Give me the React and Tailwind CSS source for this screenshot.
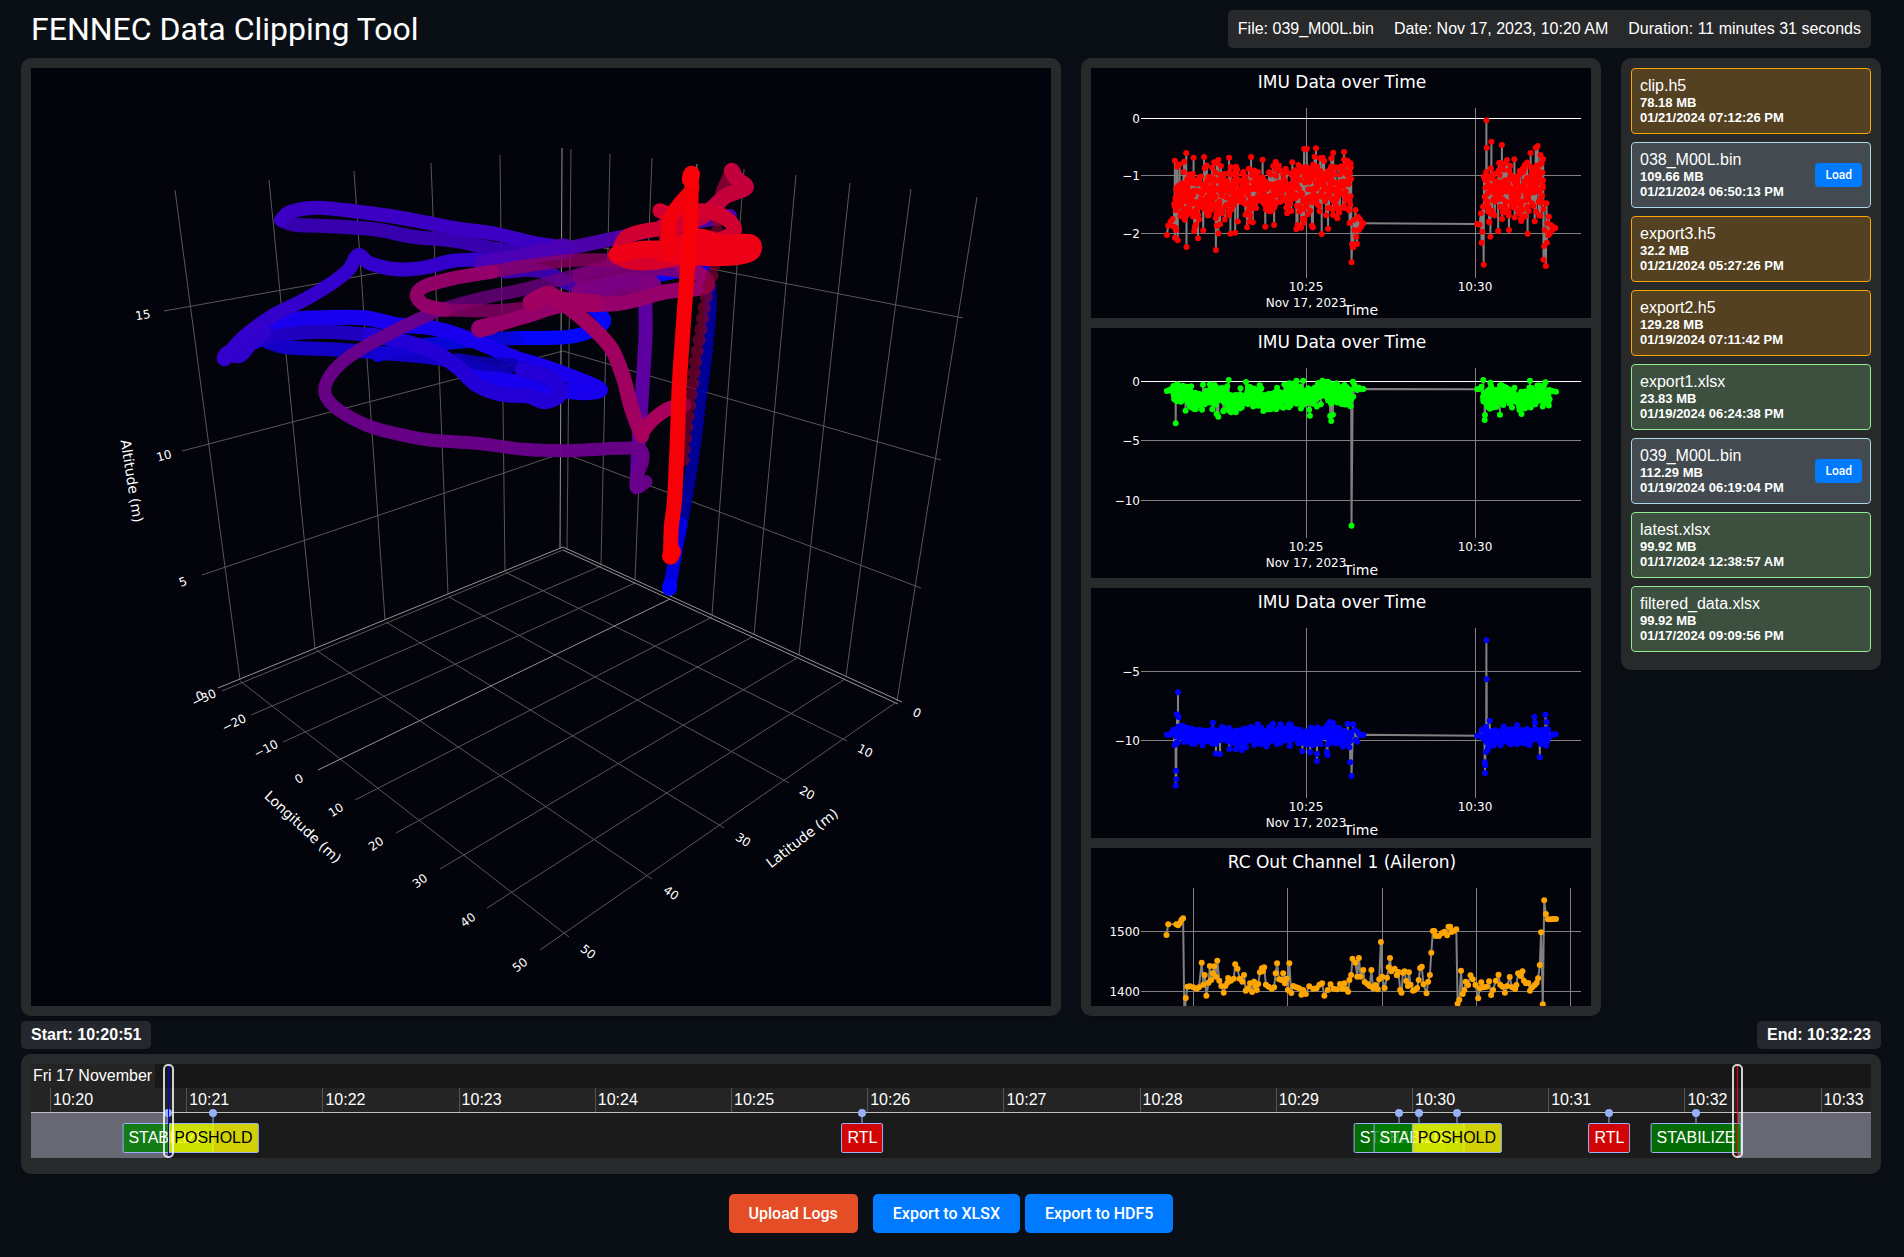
import React from "react";

/* ---------- helpers ---------- */

function rng(seed) {
  let s = seed;
  return () => {
    s = (s * 1664525 + 1013904223) % 4294967296;
    return s / 4294967296;
  };
}

// Catmull-Rom spline through the points, as cubic segments
function spline(pts) {
  const f = (n) => Math.round(n * 10) / 10;
  let d = `M${f(pts[0][0])} ${f(pts[0][1])}`;
  for (let i = 0; i < pts.length - 1; i++) {
    const a = pts[i - 1] || pts[i];
    const b = pts[i];
    const c = pts[i + 1];
    const e = pts[i + 2] || c;
    d += `C${f(b[0] + (c[0] - a[0]) / 6)} ${f(b[1] + (c[1] - a[1]) / 6)} ${f(c[0] - (e[0] - b[0]) / 6)} ${f(c[1] - (e[1] - b[1]) / 6)} ${f(c[0])} ${f(c[1])}`;
  }
  return d;
}

const scenePoint = ([u, v]) => [u / 2.529 + 200, v / 3 + 140];

/* ---------- 3D flight path ---------- */

const GRID = [
  [175, 190, 240, 680], [269, 180, 315, 649], [354, 171, 385, 620], [431, 163, 448, 594], [500, 155, 505, 571],
  [571, 149, 567, 550], [610, 154, 601, 564], [652, 158, 635, 580], [744, 169, 712, 615],
  [796, 175, 754, 635], [850, 183, 799, 655], [911, 189, 846, 677], [977, 197, 897, 701],
  [164, 311, 563, 240], [563, 240, 963, 318],
  [182, 451, 563, 351], [563, 351, 941, 460],
  [202, 575, 563, 453], [563, 453, 921, 588],
  [222, 691, 563, 550],
  [251, 715, 601, 566], [283, 742, 635, 583], [355, 800, 712, 617], [396, 833, 752, 637],
  [440, 869, 797, 658], [487, 908, 845, 679], [540, 950, 895, 703],
  [505, 572, 847, 741], [449, 597, 789, 783], [386, 622, 724, 828], [316, 650, 652, 879], [240, 681, 569, 937],
];
const ZERO = [
  [562, 148, 560, 549], [697, 164, 671, 597],
  [218, 688, 563, 547], [563, 547, 902, 702], [563, 550, 898, 704], [318, 770, 670, 599],
];

const SCENE_TICKS = [
  ["15", 143, 315, -9], ["10", 164, 456, -15], ["5", 183, 582, -20],
  ["−30", 204, 698, -25], ["0", 200, 696, -25], ["−20", 234, 723, -26], ["−10", 266, 749, -27], ["0", 299, 779, -30],
  ["10", 336, 810, -32], ["20", 376, 844, -34], ["30", 420, 881, -36], ["40", 468, 920, -37], ["50", 520, 965, -38],
  ["0", 917, 713, 25], ["10", 865, 751, 27], ["20", 807, 793, 30], ["30", 743, 840, 33], ["40", 671, 893, 36], ["50", 588, 952, 39],
];

const PATHS = [
  { c: "#0000b4", w: 13, o: 0.6, dash: "0 8", p: [[1215, 1180], [1230, 1080], [1250, 930], [1265, 790], [1280, 650], [1290, 530], [1290, 440], [1270, 385]] },
  { c: "#0000a8", w: 12, o: 0.7, dash: "0 9", p: [[1200, 1250], [1230, 1080], [1250, 930], [1265, 790], [1280, 650], [1290, 530], [1290, 440], [1270, 385]] },
  { c: "#0000dc", w: 13, o: 1, p: [[1188, 1340], [1203, 1240], [1216, 1150]] },
  { c: "#0000ff", w: 15, o: 1, p: [[1187, 1345], [1188, 1338]] },
  { c: "#0606fa", w: 14, o: 1, p: [[1270, 380], [1180, 400], [1100, 418], [1010, 440], [970, 470], [1005, 515], [1022, 545], [985, 575], [920, 592], [800, 594]] },
  { c: "#0606e0", w: 14, o: 0.95, p: [[800, 594], [660, 605], [540, 620], [450, 645]] },
  { c: "#1400d2", w: 14, o: 0.95, p: [[170, 605], [220, 622], [330, 628], [470, 640], [600, 655], [720, 690], [800, 725], [880, 750]] },
  { c: "#1800ee", w: 15, o: 1, p: [[140, 605], [180, 560], [240, 538], [320, 533], [420, 534], [500, 555], [580, 562], [640, 580], [720, 615], [800, 655], [870, 680], [950, 715], [1012, 748], [975, 758], [920, 752], [850, 738], [760, 720], [690, 700]] },
  { c: "#0c00b4", w: 14, o: 0.9, p: [[650, 660], [720, 672], [790, 675]] },
  { c: "#1000c8", w: 14, o: 0.95, p: [[815, 685], [860, 705], [905, 735]] },
  { c: "#2000c8", w: 14, o: 0.95, p: [[150, 600], [220, 582], [320, 575], [430, 585]] },
  { c: "#2400d6", w: 15, o: 1, p: [[430, 585], [520, 605], [600, 640], [655, 685], [700, 735], [760, 762], [830, 768], [872, 785], [910, 765], [905, 735], [870, 705], [815, 690]] },
  { c: "#3000cc", w: 16, o: 1, p: [[62, 655], [72, 640], [100, 645], [125, 612], [160, 575]] },
  { c: "#3400cc", w: 14, o: 1, p: [[62, 655], [110, 592], [180, 530], [260, 482], [330, 432], [375, 390], [400, 345], [430, 370], [500, 388], [570, 382], [640, 362], [720, 358], [820, 350], [930, 335]] },
  { c: "#3a00b8", w: 14, o: 0.95, p: [[205, 240], [240, 254], [320, 258], [440, 268], [540, 290], [640, 302], [740, 325], [860, 345]] },
  { c: "#3c00c4", w: 14, o: 1, p: [[930, 325], [840, 308], [750, 282], [650, 265], [560, 245], [480, 228], [400, 215], [300, 203], [230, 215], [205, 240]] },
  { c: "#4000bc", w: 14, o: 0.9, p: [[770, 395], [830, 390], [880, 398], [930, 430], [970, 440]] },
  { c: "#5000b0", w: 14, o: 0.95, p: [[930, 325], [1010, 305], [1090, 285], [1200, 255], [1280, 240], [1340, 228]] },
  { c: "#4c00b4", w: 18, o: 0.95, p: [[715, 372], [790, 358], [860, 340], [920, 322]] },
  { c: "#5c00a0", w: 14, o: 1, p: [[1160, 350], [1140, 400], [1127, 470], [1127, 580], [1120, 720], [1112, 860], [1107, 960], [1104, 1042]] },
  { c: "#6c008c", w: 13, o: 0.95, p: [[1128, 1025], [1104, 1042], [1108, 1000], [1120, 960], [1112, 928], [1060, 925], [930, 932], [820, 928], [700, 910], [580, 900], [500, 882], [420, 855], [340, 800], [315, 750], [340, 690], [400, 632], [500, 568], [600, 512]] },
  { c: "#6e0082", w: 13, o: 0.8, p: [[600, 512], [700, 478], [830, 445], [960, 402], [1060, 370], [1180, 350]] },
  { c: "#80007c", w: 22, o: 0.95, p: [[965, 460], [1020, 445], [1090, 428], [1140, 440]] },
  { c: "#7c0078", w: 15, o: 0.9, p: [[960, 410], [1060, 385], [1170, 385], [1260, 400]] },
  { c: "#8c0064", w: 13, o: 0.8, p: [[1240, 365], [1100, 362], [960, 360], [840, 375], [740, 395]] },
  { c: "#98006c", w: 14, o: 0.95, p: [[740, 395], [640, 415], [570, 438], [548, 465], [568, 495], [620, 510]] },
  { c: "#8c0068", w: 13, o: 0.8, p: [[620, 510], [740, 512], [830, 505]] },
  { c: "#900070", w: 18, o: 1, p: [[708, 566], [735, 558]] },
  { c: "#96006a", w: 15, o: 1, p: [[710, 565], [770, 547], [840, 522], [920, 495], [1060, 490], [1180, 455], [1275, 442], [1272, 410], [1220, 378]] },
  { c: "#a00060", w: 18, o: 1, p: [[838, 488], [880, 465], [915, 482], [1000, 490]] },
  { c: "#a00060", w: 15, o: 1, p: [[890, 470], [940, 510], [990, 560], [1040, 625], [1070, 710], [1090, 800], [1117, 888]] },
  { c: "#a8005c", w: 14, o: 1, p: [[1117, 880], [1145, 840], [1185, 806], [1225, 795]] },
  { c: "#840030", w: 13, o: 0.7, dash: "0 11", p: [[1222, 960], [1232, 850], [1245, 740], [1255, 650], [1268, 560], [1280, 470], [1300, 380], [1308, 270], [1318, 170]] },
  { c: "#8c0034", w: 12, o: 0.9, dash: "0 4", p: [[1310, 240], [1318, 160], [1340, 100]] },
  { c: "#c4003c", w: 16, o: 1, p: [[1345, 92], [1358, 118], [1380, 143], [1330, 168], [1300, 200], [1260, 235], [1170, 260]] },
  { c: "#d20030", w: 15, o: 1, p: [[1163, 212], [1200, 225], [1270, 212], [1330, 235], [1350, 275], [1290, 305], [1180, 300]] },
  { c: "#d00030", w: 15, o: 1, p: [[1062, 325], [1080, 290], [1130, 272], [1210, 260]] },
  { c: "#d80028", w: 16, o: 1, p: [[1052, 345], [1090, 365], [1150, 365], [1220, 350]] },
  { c: "#ee0016", w: 17, o: 1, p: [[1055, 343], [1120, 328], [1190, 325], [1260, 292], [1320, 308], [1392, 308], [1393, 338], [1340, 352], [1250, 350], [1170, 340]] },
  { c: "#ee0016", w: 20, o: 1, p: [[1200, 325], [1290, 325], [1380, 324]] },
  { c: "#f2000e", w: 15, o: 1, p: [[1240, 115], [1243, 150], [1215, 190], [1190, 235], [1185, 290], [1185, 335]] },
  { c: "#f80008", w: 15, o: 1, p: [[1242, 160], [1240, 260], [1232, 400], [1222, 560], [1212, 740], [1207, 900], [1200, 1080], [1192, 1160], [1190, 1250]] },
  { c: "#ff0008", w: 17, o: 1, p: [[1243, 103], [1240, 118]] },
  { c: "#ff0000", w: 17, o: 1, p: [[1195, 1235], [1190, 1248]] },
];

function FlightScene() {
  return (
    <svg viewBox="31 68 1020 938" className="block h-full w-full bg-[#03030c]" role="img" aria-label="Flight path">
      <g stroke="#585858" strokeWidth="1">
        {GRID.map(([a, b, c, d], i) => <line key={i} x1={a} y1={b} x2={c} y2={d} />)}
      </g>
      <g stroke="#949494" strokeWidth="1">
        {ZERO.map(([a, b, c, d], i) => <line key={i} x1={a} y1={b} x2={c} y2={d} />)}
      </g>
      <g fill="none" strokeLinecap="round" strokeLinejoin="round">
        {PATHS.map((t, i) => (
          <path key={i} d={spline(t.p.map(scenePoint))} stroke={t.c} strokeWidth={t.w} opacity={t.o} strokeDasharray={t.dash} />
        ))}
      </g>
      <g fill="#fff" fontFamily="'DejaVu Sans', sans-serif" fontSize="12" textAnchor="middle">
        {SCENE_TICKS.map(([t, x, y, r], i) => (
          <text key={i} transform={`translate(${x} ${y}) rotate(${r})`} y="4">{t}</text>
        ))}
        <g fontSize="14">
          <text transform="translate(132 481) rotate(81)" y="5">Altitude (m)</text>
          <text transform="translate(303 827) rotate(43)" y="5">Longitude (m)</text>
          <text transform="translate(802 838) rotate(-38)" y="5">Latitude (m)</text>
        </g>
      </g>
    </svg>
  );
}

/* ---------- time series ---------- */

// noisy samples around a slowly swaying centre; values run on a 3x vertical grid
function band(rand, from, to, count, centre, spread, clip, sway) {
  const out = [];
  for (let i = 0; i < count; i++) {
    const u = from + ((to - from) * i) / count;
    const noise = ((rand() + rand() + rand()) / 1.5 - 1) * spread;
    let v = centre + sway * Math.sin(u / 17) + noise;
    if (v < clip[0] || v > clip[1]) v = centre + noise / 3;
    out.push([u, v]);
  }
  return out;
}
const byTime = (pts) => pts.slice().sort((a, b) => a[0] - b[0]);

const r1 = rng(7);
const RED = byTime([
  [257, 555], [261, 527], [268, 515], [274, 507], [277, 530], [281, 563], [284, 540], [289, 571],
  ...band(r1, 279, 420, 170, 440, 150, [330, 560], 8),
  ...band(r1, 420, 640, 250, 425, 120, [345, 515], 8),
  ...band(r1, 640, 803, 180, 415, 150, [320, 535], 8),
  [308, 335], [314, 309], [315, 591], [336, 323], [349, 565], [367, 321], [402, 600], [409, 330], [441, 323], [445, 551], [459, 548],
  [494, 532], [506, 321], [511, 517], [540, 329], [548, 530], [574, 525], [579, 336], [628, 337], [640, 537], [654, 533], [663, 297], [671, 296],
  [698, 295], [694, 320], [686, 527], [715, 552], [734, 536], [722, 333], [749, 308], [761, 505], [781, 306], [792, 333], [800, 340],
  [803, 637], [805, 583], [808, 592], [810, 510], [812, 540], [815, 480], [817, 560], [819, 582], [822, 500], [825, 540], [828, 508], [832, 530], [835, 520], [838, 520],
  [1175, 522], [1182, 524], [1186, 490], [1188, 578], [1190, 545], [1192, 470], [1194, 644], [1195, 380], [1197, 440],
  [1202, 211], [1203, 293],
  ...band(r1, 1198, 1372, 200, 420, 150, [335, 530], 8),
  [1217, 275], [1214, 560], [1248, 285], [1237, 543], [1269, 540], [1263, 330], [1285, 328], [1324, 551], [1333, 309], [1348, 293], [1354, 288], [1362, 315], [1370, 327],
  [1371, 629], [1373, 588], [1375, 540], [1378, 648], [1380, 460], [1381, 578], [1383, 520], [1385, 556], [1387, 500], [1390, 550], [1393, 525], [1397, 540], [1401, 532], [1406, 534],
]);

const r2 = rng(21);
const GREEN = byTime([
  [257, 213], [263, 211], [269, 208], [274, 215], [283, 310],
  ...band(r2, 276, 420, 190, 232, 52, [190, 274], 8),
  [409, 290], [404, 282], [440, 180], [491, 186],
  ...band(r2, 420, 620, 260, 237, 46, [192, 280], 7),
  [640, 182], [660, 182], [717, 182], [680, 287], [743, 303], [740, 288], [748, 284],
  ...band(r2, 620, 803, 230, 222, 50, [184, 272], 10),
  [803, 617], [807, 185], [808, 230], [812, 195], [816, 205], [820, 210], [825, 203], [831, 208], [838, 207],
  [1175, 208], [1181, 207], [1187, 200], [1193, 180], [1197, 300], [1198, 285], [1214, 188],
  ...band(r2, 1192, 1390, 240, 230, 48, [190, 280], 8),
  [1242, 284], [1306, 282], [1331, 182], [1377, 187], [1393, 212], [1400, 214], [1408, 215],
]);

const r3 = rng(33);
const BLUE = byTime([
  [257, 494], [264, 494], [270, 490], [275, 480], [283, 647], [284, 602], [285, 628], [280, 525], [287, 433], [290, 367], [291, 441],
  ...band(r3, 282, 803, 640, 497, 38, [462, 534], 4),
  [393, 458], [402, 551], [414, 552], [442, 537], [461, 538], [479, 540], [491, 532], [526, 463], [571, 461], [593, 463], [658, 544], [681, 547],
  [701, 552], [701, 573], [730, 546], [732, 555], [739, 456], [749, 460], [792, 462], [797, 532], [799, 577], [803, 618], [808, 463],
  [812, 480], [816, 510], [820, 515], [822, 486], [828, 494], [833, 496], [838, 494],
  [1175, 497], [1181, 497], [1187, 480], [1192, 505], [1197, 577], [1198, 609], [1199, 586], [1201, 546], [1202, 211], [1203, 328], [1206, 540], [1212, 452],
  ...band(r3, 1196, 1385, 240, 499, 36, [466, 534], 4),
  [1293, 465], [1344, 440], [1346, 458], [1360, 562], [1377, 434], [1380, 456], [1378, 527], [1390, 500], [1398, 493], [1407, 493],
]);

const ORANGE = [
  [256, 315], [261, 283], [285, 283], [290, 286], [295, 280], [300, 270], [305, 265], [309, 580], [313, 504], [318, 470], [325, 469], [335, 472], [345, 476],
  [352, 472], [360, 398], [365, 464], [369, 435], [374, 497], [380, 458], [384, 408], [388, 450], [393, 430], [397, 409], [402, 440], [406, 392], [412, 452],
  [418, 468], [425, 488], [430, 468], [436, 458], [438, 444], [446, 452], [455, 446], [459, 403], [466, 416], [472, 446], [480, 455], [485, 435], [490, 482],
  [497, 475], [503, 460], [509, 486], [515, 455], [519, 468], [523, 480], [527, 462], [532, 427], [538, 415], [541, 424], [545, 412], [550, 464], [558, 470],
  [567, 476], [574, 472], [579, 430], [583, 400], [589, 448], [596, 450], [601, 430], [606, 460], [611, 446], [615, 480], [619, 400], [625, 489], [631, 468],
  [640, 472], [648, 475], [655, 494], [660, 480], [668, 492], [678, 469], [690, 476], [700, 475], [708, 464], [716, 460], [723, 497], [733, 480], [741, 463],
  [750, 476], [760, 478], [769, 462], [776, 476], [782, 460], [788, 478], [793, 485], [797, 450], [802, 435], [806, 386], [815, 398], [820, 440], [825, 384],
  [830, 440], [838, 420], [842, 456], [850, 462], [857, 468], [862, 420], [867, 475], [874, 465], [881, 478], [885, 448], [890, 336], [894, 440], [901, 474],
  [908, 443], [913, 412], [917, 384], [921, 424], [931, 416], [937, 436], [942, 426], [947, 480], [951, 488], [955, 428], [960, 424], [965, 453], [970, 468],
  [973, 427], [978, 464], [985, 482], [990, 480], [997, 474], [1002, 450], [1006, 414], [1011, 410], [1016, 463], [1025, 490], [1030, 455], [1035, 435],
  [1039, 368], [1044, 303], [1048, 303], [1052, 318], [1062, 318], [1070, 310], [1078, 305], [1086, 316], [1090, 290], [1095, 290], [1099, 306], [1105, 303],
  [1113, 298], [1117, 521], [1122, 509], [1127, 422], [1132, 492], [1137, 480], [1141, 455], [1148, 465], [1155, 436], [1162, 448], [1170, 465], [1178, 505],
  [1183, 475], [1187, 457], [1195, 472], [1203, 470], [1210, 454], [1216, 495], [1222, 480], [1230, 452], [1238, 434], [1243, 464], [1250, 470], [1257, 488],
  [1264, 468], [1271, 441], [1278, 472], [1287, 477], [1291, 465], [1296, 430], [1303, 438], [1309, 424], [1313, 452], [1319, 460], [1326, 459], [1331, 482],
  [1338, 472], [1345, 465], [1351, 458], [1355, 445], [1360, 405], [1364, 307], [1369, 523], [1373, 211], [1378, 252], [1384, 268], [1392, 268], [1400, 267], [1408, 267],
];

const FIVE_MIN = [["10:25", 215], ["10:30", 384]];

const CHARTS = [
  { title: "IMU Data over Time", color: "#ff0000", data: RED, shift: 18, y: [["0", 50, true], ["−1", 107], ["−2", 165]], x: FIVE_MIN },
  { title: "IMU Data over Time", color: "#00ff00", data: GREEN, shift: 8, y: [["0", 53, true], ["−5", 112], ["−10", 172]], x: FIVE_MIN },
  { title: "IMU Data over Time", color: "#0000ff", data: BLUE, shift: 18, y: [["−5", 83], ["−10", 152]], x: FIVE_MIN },
  { title: "RC Out Channel 1 (Aileron)", color: "#ffa500", data: ORANGE, shift: 18, y: [["1500", 83], ["1400", 143]], x: [["", 102], ["", 196], ["", 291], ["", 385], ["", 479]] },
];

function Chart({ title, color, data, shift, x, y }) {
  const pts = data.map(([u, v]) => [Math.round((u / 2.958 - 11) * 10) / 10, Math.round((v / 3 - shift) * 10) / 10]);
  const labelled = x[0][0] !== "";
  return (
    <svg viewBox="0 0 500 250" className="block w-full shrink-0 bg-[#03030c]" role="img" aria-label={title}>
      <g stroke="#808080" strokeWidth="1" shapeRendering="crispEdges">
        {x.map(([, p]) => <line key={p} x1={p + 0.5} y1="40" x2={p + 0.5} y2="210" />)}
        {y.map(([, p, zero]) => <line key={p} x1="50" y1={p + 0.5} x2="490" y2={p + 0.5} stroke={zero ? "#fff" : "#808080"} />)}
      </g>
      <polyline points={pts.map((p) => p.join(",")).join(" ")} fill="none" stroke="#808080" strokeWidth="2" />
      <g fill={color}>
        {pts.map((p, i) => <circle key={i} cx={p[0]} cy={p[1]} r="3" />)}
      </g>
      <g fill="#fff" fontFamily="'DejaVu Sans', sans-serif" fontSize="12">
        <text x="251" y="20" fontSize="17" textAnchor="middle">{title}</text>
        {y.map(([t, p]) => <text key={t} x="49" y={p + 5} textAnchor="end">{t}</text>)}
        {labelled && (
          <g textAnchor="middle">
            {x.map(([t, p]) => <text key={t} x={p} y="223">{t}</text>)}
            <text x="215" y="239">Nov 17, 2023</text>
            <text x="270" y="247" fontSize="14">Time</text>
          </g>
        )}
      </g>
    </svg>
  );
}

/* ---------- files ---------- */

const FILES = [
  ["clip.h5", "78.18 MB", "01/21/2024 07:12:26 PM"],
  ["038_M00L.bin", "109.66 MB", "01/21/2024 06:50:13 PM"],
  ["export3.h5", "32.2 MB", "01/21/2024 05:27:26 PM"],
  ["export2.h5", "129.28 MB", "01/19/2024 07:11:42 PM"],
  ["export1.xlsx", "23.83 MB", "01/19/2024 06:24:38 PM"],
  ["039_M00L.bin", "112.29 MB", "01/19/2024 06:19:04 PM"],
  ["latest.xlsx", "99.92 MB", "01/17/2024 12:38:57 AM"],
  ["filtered_data.xlsx", "99.92 MB", "01/17/2024 09:09:56 PM"],
];
const FILE_STYLE = {
  h5: "border-[#ffa500] bg-[#ffa500]/20",
  bin: "border-[#add8e6] bg-[#add8e6]/20",
  xlsx: "border-[#90ee90] bg-[#90ee90]/20",
};

function FileCard({ file: [name, size, date] }) {
  const ext = name.split(".")[1];
  return (
    <li className={`flex items-center justify-between rounded-[4px] border bg-clip-padding p-2 ${FILE_STYLE[ext]}`}>
      <div className="text-[13px] leading-[15px] font-bold">
        <div className="text-base leading-[18px] font-normal">{name}</div>
        <div>{size}</div>
        <div>{date}</div>
      </div>
      {ext === "bin" && (
        <button className="h-6 rounded-[4px] bg-[#007bff] px-[10px] font-['Roboto',sans-serif] text-xs font-medium">Load</button>
      )}
    </li>
  );
}

/* ---------- timeline ---------- */

// horizontal position of a time, in minutes after 10:20, as a share of the strip
const at = (minutes) => `${((19 + minutes * 136.2) / 1840) * 100}%`;

const MODES = [
  [0.865, "STABILIZE"], [1.2, "POSHOLD"], [5.965, "RTL"], [9.905, "STABILIZE"], [10.05, "STABILIZE"],
  [10.33, "POSHOLD"], [11.45, "RTL"], [12.085, "STABILIZE"],
];
const MODE_STYLE = {
  STABILIZE: "bg-[#008000]/80 text-white",
  POSHOLD: "bg-[#ffff00]/80 text-black",
  RTL: "bg-[#ff0000]/80 text-white",
};

function Cursor({ minutes, color, label }) {
  return (
    <div role="slider" aria-label={label} aria-valuenow={minutes} className="absolute inset-y-0 -ml-[5px] flex w-[11px] justify-center rounded-[5px] border-2 border-white/80" style={{ left: at(minutes) }}>
      <span className={`w-px ${color}`} />
    </div>
  );
}

function Timeline() {
  return (
    <div className="relative h-[94px] overflow-hidden bg-[#1b1b1b] leading-6">
      <div className="h-6 bg-[#171717]">
        <span className="inline-block bg-[#242424] pr-[3px] pl-[2px]">Fri 17 November</span>
      </div>
      <div className="relative h-6 bg-[#242424]">
        {Array.from({ length: 14 }, (_, i) => (
          <span key={i} className="absolute top-0 border-l border-[#555] pl-[2px]" style={{ left: at(i) }}>{`10:${20 + i}`}</span>
        ))}
      </div>
      <div className="relative h-[46px] border-t border-[#bfbfbf]">
        <div className="absolute inset-y-0 left-0 bg-[#676874]" style={{ width: at(0.865) }} />
        <div className="absolute inset-y-0 right-0 bg-[#676874]" style={{ left: at(12.385) }} />
        {MODES.map(([m], i) => (
          <div key={i} className="absolute top-0 h-[10px] w-[2px] -translate-x-1/2 bg-[#97b0f8]/50" style={{ left: at(m) }} />
        ))}
        {MODES.map(([m, name], i) => (
          <div key={i} className={`absolute top-[10px] h-[30px] -translate-x-1/2 rounded-[2px] border border-[#97b0f8] px-[5px] leading-7 ${MODE_STYLE[name]}`} style={{ left: at(m) }}>{name}</div>
        ))}
        {MODES.map(([m], i) => (
          <div key={i} className="absolute -top-1 size-2 -translate-x-1/2 rounded-full bg-[#97b0f8]" style={{ left: at(m) }} />
        ))}
      </div>
      <Cursor minutes={0.865} color="bg-[#0000ff]" label="Start" />
      <Cursor minutes={12.385} color="bg-[#ff0000]" label="End" />
    </div>
  );
}

/* ---------- page ---------- */

const PANEL = "rounded-[10px] bg-[#28292b] shadow-[0_4px_8px_rgba(0,0,0,0.2)]";
const ACTION = "rounded-[5px] px-5 py-[10px] leading-[19px] font-medium";

export default function App() {
  return (
    <div className="flex h-screen min-h-[900px] flex-col bg-[#0a0f16] pr-[23px] pb-6 pl-[21px] font-['Liberation_Sans',Arial,sans-serif] text-base text-white">
      <header className="flex h-[58px] shrink-0 items-start justify-between px-[10px] pt-[10px]">
        <h1 className="font-['Roboto',sans-serif] text-[32px] leading-[38px]">FENNEC Data Clipping Tool</h1>
        <div className="flex gap-5 rounded-[5px] bg-[#28292b] p-[10px] leading-[18px]">
          <span>File: 039_M00L.bin</span>
          <span>Date: Nov 17, 2023, 10:20 AM</span>
          <span>Duration: 11 minutes 31 seconds</span>
        </div>
      </header>

      <main className="grid min-h-0 flex-1 grid-cols-[minmax(0,1fr)_520px_260px] grid-rows-[minmax(0,1fr)] gap-5">
        <section className={`${PANEL} p-[10px]`}>
          <FlightScene />
        </section>
        <section className={`${PANEL} p-[10px]`}>
          <div className="flex h-full flex-col gap-[10px] overflow-hidden">
            {CHARTS.map((c, i) => <Chart key={i} {...c} />)}
          </div>
        </section>
        <ul className={`${PANEL} flex flex-col gap-2 self-start px-[10px] pt-[10px] pb-[18px]`}>
          {FILES.map((f) => <FileCard key={f[0]} file={f} />)}
        </ul>
      </main>

      <div className="flex justify-between py-[5px] leading-[18px] font-bold">
        <span className="rounded-[5px] bg-[#25272e] px-[10px] py-[5px]">Start: 10:20:51</span>
        <span className="rounded-[5px] bg-[#25272e] px-[10px] py-[5px]">End: 10:32:23</span>
      </div>

      <section className={`${PANEL} px-[10px] pt-[10px] pb-4`}>
        <Timeline />
      </section>

      <footer className="mt-5 flex justify-center gap-[5px] font-['Roboto',sans-serif]">
        <button className={`${ACTION} mr-[10px] bg-[#e44d26]`}>Upload Logs</button>
        <button className={`${ACTION} bg-[#007bff]`}>Export to XLSX</button>
        <button className={`${ACTION} bg-[#007bff]`}>Export to HDF5</button>
      </footer>
    </div>
  );
}
